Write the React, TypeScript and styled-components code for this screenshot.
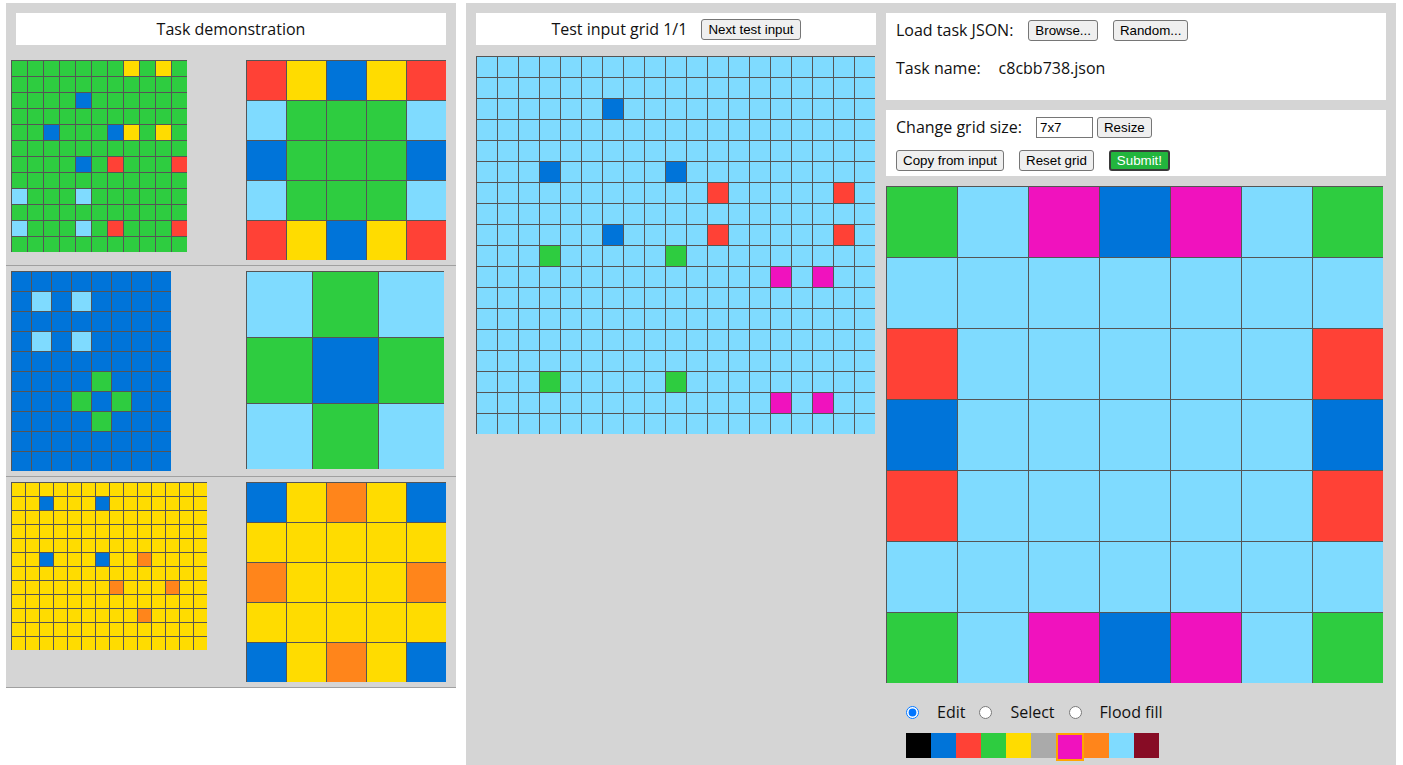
import React from "react";
import styled, { createGlobalStyle } from "styled-components";

const COLORS = [
  "#000000",
  "#0074D9",
  "#FF4136",
  "#2ECC40",
  "#FFDC00",
  "#AAAAAA",
  "#F012BE",
  "#FF851B",
  "#7FDBFF",
  "#870C25",
];

type Grid = number[][];

// build a grid from a background colour and a list of [row, col, colour]
const fill = (rows: number, cols: number, bg: number, points: number[][]): Grid => {
  const g = Array.from({ length: rows }, () => Array(cols).fill(bg));
  points.forEach(([r, c, v]) => (g[r][c] = v));
  return g;
};

const parse = (rows: string[]): Grid => rows.map((r) => r.split("").map(Number));

const PAIRS: { input: Grid; output: Grid }[] = [
  {
    input: parse([
      "33333334343",
      "33333333333",
      "33331333333",
      "33333333333",
      "33133314343",
      "33333333333",
      "33331323332",
      "33333333333",
      "83338333333",
      "33333333333",
      "83338323332",
      "33333333333",
    ]),
    output: parse(["24142", "83338", "13331", "83338", "24142"]),
  },
  {
    input: parse([
      "11111111",
      "18181111",
      "11111111",
      "18181111",
      "11111111",
      "11113111",
      "11131311",
      "11113111",
      "11111111",
      "11111111",
    ]),
    output: parse(["838", "313", "838"]),
  },
  {
    input: fill(12, 14, 4, [
      [1, 2, 1],
      [1, 6, 1],
      [5, 2, 1],
      [5, 6, 1],
      [5, 9, 7],
      [7, 7, 7],
      [7, 11, 7],
      [9, 9, 7],
    ]),
    output: parse(["14741", "44444", "74447", "44444", "14741"]),
  },
];

const TEST_INPUT = fill(18, 19, 8, [
  [2, 6, 1],
  [5, 3, 1],
  [5, 9, 1],
  [8, 6, 1],
  [6, 11, 2],
  [6, 17, 2],
  [8, 11, 2],
  [8, 17, 2],
  [9, 3, 3],
  [9, 9, 3],
  [15, 3, 3],
  [15, 9, 3],
  [10, 14, 6],
  [10, 16, 6],
  [16, 14, 6],
  [16, 16, 6],
]);

const TEST_OUTPUT = parse([
  "3861683",
  "8888888",
  "2888882",
  "1888881",
  "2888882",
  "8888888",
  "3861683",
]);

const GlobalStyle = createGlobalStyle`
  html, body {
    margin: 0;
    padding: 0;
    overflow: hidden;
    background: #ffffff;
  }
  body {
    font-family: "Open Sans", "Liberation Sans", sans-serif;
    font-size: 16px;
    color: #111;
  }
`;

const Page = styled.div`
  display: flex;
  align-items: flex-start;
  gap: 10px;
  padding: 3px 0 0 6px;
`;

const DemoPanel = styled.div`
  width: 450px;
  background-color: #d5d5d5;
`;

const TitleBox = styled.div`
  height: 32px;
  background: #ffffff;
  display: flex;
  align-items: center;
  justify-content: center;
  gap: 14px;
  font-size: 16px;
`;

const DemoTitle = styled(TitleBox)`
  margin: 10px;
`;

const PairRow = styled.div`
  display: flex;
  align-items: flex-start;
  padding: 5px;
  border-bottom: 1px solid #a0a0a0;
`;

const PreviewSlot = styled.div`
  width: 200px;
  height: 200px;
`;

const OutputSlot = styled(PreviewSlot)`
  margin-left: 35px;
`;

const GridBox = styled.div<{ $cols: number; $size: number }>`
  display: grid;
  grid-template-columns: repeat(${({ $cols }) => $cols}, ${({ $size }) => $size}px);
  grid-auto-rows: ${({ $size }) => $size}px;
  width: max-content;
`;

const Cell = styled.div<{ $color: string }>`
  box-sizing: border-box;
  background-color: ${({ $color }) => $color};
  border-top: 1px solid #555;
  border-left: 1px solid #555;
`;

const Workspace = styled.div`
  width: 910px;
  height: 780px;
  padding: 10px;
  background-color: #d5d5d5;
  display: flex;
  gap: 10px;
`;

const TestColumn = styled.div`
  width: 400px;
  display: flex;
  flex-direction: column;
`;

const TestTitle = styled(TitleBox)`
  margin-bottom: 11px;
`;

const EditorColumn = styled.div`
  width: 500px;
  display: flex;
  flex-direction: column;
`;

const ControlBox = styled.div`
  background: #ffffff;
  padding: 0 10px;
  display: flex;
  flex-direction: column;
`;

const LoadBox = styled(ControlBox)`
  gap: 4px;
  padding-bottom: 15px;
  margin-bottom: 10px;
`;

const SizeBox = styled(ControlBox)`
  gap: 6px;
  padding-bottom: 5px;
  margin-bottom: 10px;
`;

const Row = styled.div<{ $h: number }>`
  height: ${({ $h }) => $h}px;
  display: flex;
  align-items: center;
`;

const Label = styled.span``;

const TaskName = styled.span`
  margin-left: 18px;
`;

const Button = styled.button<{ $gap?: number; $primary?: boolean }>`
  font-family: "Liberation Sans", Arial, sans-serif;
  font-size: 13.33px;
  height: 21px;
  box-sizing: border-box;
  padding: 1px 6px;
  margin: 0 0 0 ${({ $gap = 0 }) => $gap}px;
  border-radius: 3px;
  background: ${({ $primary }) => ($primary ? "#22b53d" : "#efefef")};
  color: ${({ $primary }) => ($primary ? "#ffffff" : "#000000")};
  border: ${({ $primary }) => ($primary ? "2px solid #3a3a3a" : "1px solid #767676")};
  cursor: pointer;
`;

const SizeInput = styled.input`
  width: 57px;
  height: 21px;
  box-sizing: border-box;
  margin: 0 0 0 14px;
  padding: 1px 3px;
  border: 1px solid #767676;
  font-family: "Liberation Sans", Arial, sans-serif;
  font-size: 13.33px;
`;

const Toolbar = styled.div`
  padding: 19px 0 0 20px;
  display: flex;
  flex-direction: column;
  gap: 11px;
`;

const ToolRow = styled.div`
  height: 20px;
  display: flex;
  align-items: center;
`;

const Radio = styled.input`
  width: 13px;
  height: 13px;
  margin: 0;
`;

const RadioLabel = styled.label`
  margin: 0 14px 0 18px;
  font-size: 16px;
`;

const Palette = styled.div`
  display: flex;
  align-items: flex-start;
`;

const Swatch = styled.div<{ $color: string; $selected?: boolean }>`
  width: ${({ $selected }) => ($selected ? 24 : 25)}px;
  height: ${({ $selected }) => ($selected ? 24 : 25)}px;
  background-color: ${({ $color }) => $color};
  border: ${({ $selected }) => ($selected ? "2px solid #ffa500" : "none")};
`;

const ArcGrid = ({ grid, box }: { grid: Grid; box: number }) => {
  const rows = grid.length;
  const cols = grid[0].length;
  const size = Math.floor(box / Math.max(rows, cols));
  return (
    <GridBox $cols={cols} $size={size}>
      {grid.flatMap((row, r) =>
        row.map((v, c) => <Cell key={`${r}-${c}`} $color={COLORS[v]} />)
      )}
    </GridBox>
  );
};

const TOOLS = ["Edit", "Select", "Flood fill"];

const App = () => {
  return (
    <>
      <GlobalStyle />
      <Page>
        <DemoPanel>
          <DemoTitle>Task demonstration</DemoTitle>
          {PAIRS.map((pair, i) => (
            <PairRow key={i}>
              <PreviewSlot>
                <ArcGrid grid={pair.input} box={200} />
              </PreviewSlot>
              <OutputSlot>
                <ArcGrid grid={pair.output} box={200} />
              </OutputSlot>
            </PairRow>
          ))}
        </DemoPanel>

        <Workspace>
          <TestColumn>
            <TestTitle>
              <span>Test input grid 1/1</span>
              <Button>Next test input</Button>
            </TestTitle>
            <ArcGrid grid={TEST_INPUT} box={400} />
          </TestColumn>

          <EditorColumn>
            <LoadBox>
              <Row $h={34}>
                <Label>Load task JSON:</Label>
                <Button $gap={15}>Browse...</Button>
                <Button $gap={15}>Random...</Button>
              </Row>
              <Row $h={34}>
                <Label>Task name:</Label>
                <TaskName>c8cbb738.json</TaskName>
              </Row>
            </LoadBox>

            <SizeBox>
              <Row $h={34}>
                <Label>Change grid size:</Label>
                <SizeInput defaultValue="7x7" />
                <Button $gap={4}>Resize</Button>
              </Row>
              <Row $h={21}>
                <Button>Copy from input</Button>
                <Button $gap={15}>Reset grid</Button>
                <Button $gap={15} $primary>
                  Submit!
                </Button>
              </Row>
            </SizeBox>

            <ArcGrid grid={TEST_OUTPUT} box={500} />

            <Toolbar>
              <ToolRow>
                {TOOLS.map((t, i) => (
                  <React.Fragment key={t}>
                    <Radio type="radio" name="tool" id={`tool-${i}`} defaultChecked={i === 0} />
                    <RadioLabel htmlFor={`tool-${i}`}>{t}</RadioLabel>
                  </React.Fragment>
                ))}
              </ToolRow>
              <Palette>
                {COLORS.map((c, i) => (
                  <Swatch key={c} $color={c} $selected={i === 6} />
                ))}
              </Palette>
            </Toolbar>
          </EditorColumn>
        </Workspace>
      </Page>
    </>
  );
};

export default App;
